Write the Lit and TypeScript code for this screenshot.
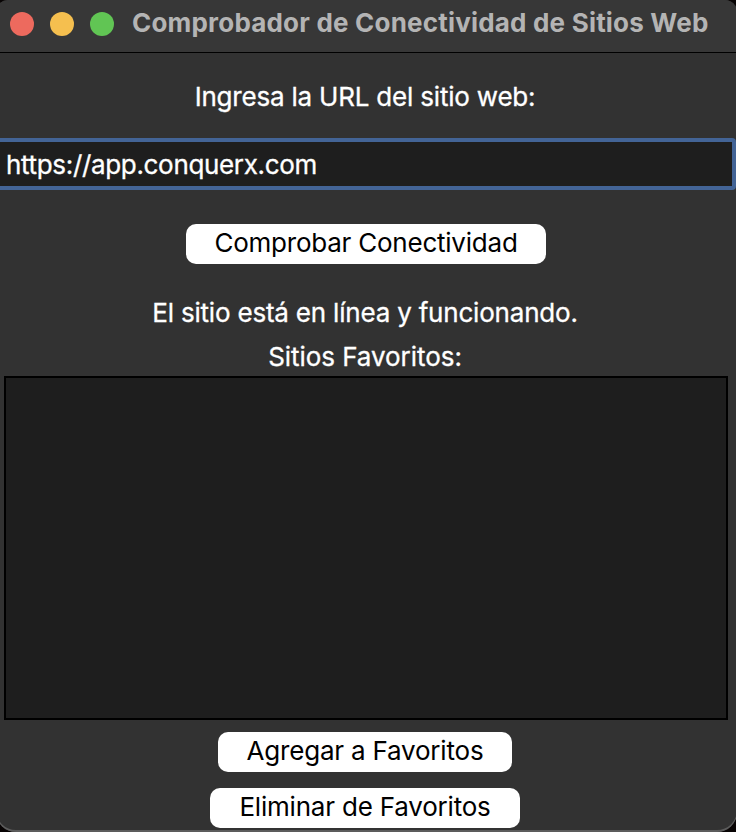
import { LitElement, html, css } from "lit";
import { customElement } from "lit/decorators.js";

@customElement("app-root")
export class AppRoot extends LitElement {
  static styles = css`
    :host { display: block; height: 832px; background: #080404; font: 400 26px/32px Inter, sans-serif; color: #fff; overflow: hidden; }
    * { box-sizing: border-box; }
    .window { height: 832px; margin: 0 -1px 0 -4px; padding: 0 1px 0 4px; background: #323232; border-radius: 12px 12px 20px 20px; box-shadow: inset 0 -2px 0 #5c5c5c; display: flex; flex-direction: column; align-items: center; overflow: hidden; }
    .bar { width: 100%; height: 53px; flex: none; background: #373737; border-bottom: 1px solid #000; display: flex; padding: 12px 0 0 10px; gap: 16px; }
    .dot { width: 24px; height: 24px; border-radius: 50%; flex: none; }
    .red { background: #ed6a5e; }
    .yellow { background: #f5bf4f; }
    .green { background: #61c554; }
    .title { font-weight: 700; color: #b4b4b4; margin: -5px 0 0 2px; white-space: nowrap; letter-spacing: 0.2px; }
    .line { white-space: nowrap; height: 32px; flex: none; letter-spacing: -0.2px; -webkit-text-stroke: 0.3px #fff; }
    .prompt { margin: 28px 6px 0 0; }
    .url { width: 740px; height: 52px; flex: none; margin: 25px 0 0 -4px; border: 4px solid #436496; border-radius: 4px; background: #1e1e1e; padding: 7px 0 0 6px; white-space: nowrap; letter-spacing: -0.33px; -webkit-text-stroke: 0.3px #fff; }
    .btn { font: inherit; letter-spacing: -0.2px; color: #000; background: #fff; border: 0; border-radius: 10px; height: 40px; flex: none; padding: 0 0 2px; white-space: nowrap; }
    .check { width: 360px; margin: 34px 4px 0 0; letter-spacing: -0.23px; }
    .status { margin: 33px 6px 0 0; }
    .favs { margin: 12px 6px 0 0; letter-spacing: -0.05px; }
    .list { width: 724px; height: 344px; flex: none; margin: 3px 4px 0 0; border: 2px solid #000; background: #1e1e1e; }
    .add { width: 294px; margin: 12px 6px 0 0; }
    .del { width: 310px; margin: 16px 6px 0 0; }
  `;
  render() {
    return html`<div class="window">
      <div class="bar">
        <span class="dot red"></span><span class="dot yellow"></span><span class="dot green"></span>
        <span class="title">Comprobador de Conectividad de Sitios Web</span>
      </div>
      <div class="line prompt">Ingresa la URL del sitio web:</div>
      <div class="url">https://app.conquerx.com</div>
      <button class="btn check">Comprobar Conectividad</button>
      <div class="line status">El sitio está en línea y funcionando.</div>
      <div class="line favs">Sitios Favoritos:</div>
      <div class="list"></div>
      <button class="btn add">Agregar a Favoritos</button>
      <button class="btn del">Eliminar de Favoritos</button>
    </div>`;
  }
}
